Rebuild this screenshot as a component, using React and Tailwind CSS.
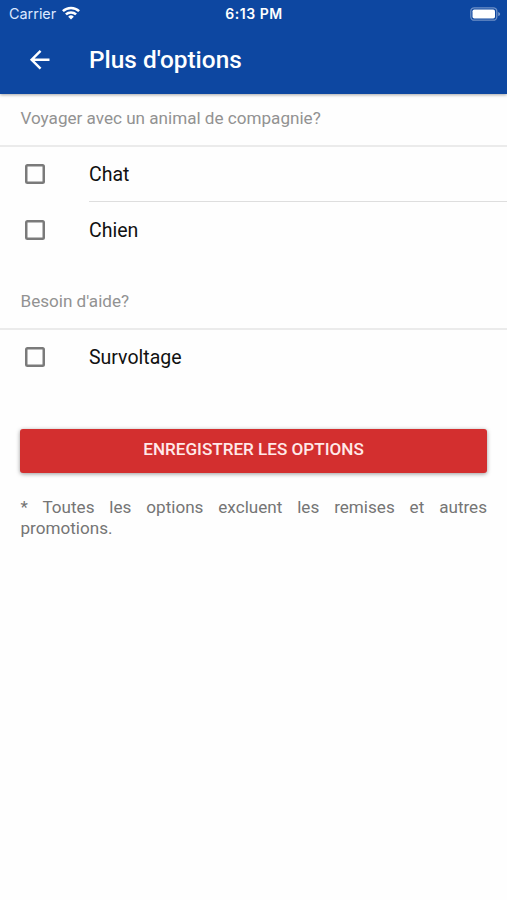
function WifiIcon() {
  return (
    <svg className="ml-[5.5px] h-[14px] w-[18px]" viewBox="0 0 18 14" fill="none" stroke="#fff" strokeWidth="2.5">
      <path d="M.9 5.2C5.3.9 12.7.9 17.1 5.2" />
      <path d="M3.9 8.4c2.8-2.7 7.4-2.7 10.2 0" />
      <path d="M9 13.4 6.2 10.7a4 4 0 0 1 5.6 0Z" fill="#fff" stroke="none" />
    </svg>
  );
}

function BatteryIcon() {
  return (
    <svg className="h-[14px] w-[31px]" viewBox="0 0 31 14">
      <rect x=".8" y=".8" width="26" height="12.4" rx="3.5" fill="none" stroke="#fff" strokeOpacity=".4" strokeWidth="1.3" />
      <rect x="2.5" y="2.5" width="22.5" height="9" rx="1.8" fill="#fff" />
      <path d="M28.2 4.9c2.6.8 2.6 3.4 0 4.2Z" fill="#fff" fillOpacity=".45" />
    </svg>
  );
}

function BackIcon() {
  return (
    <svg className="h-[29.4px] w-[29.4px]" viewBox="0 0 24 24" fill="#fff">
      <path d="M20 11H7.83l5.59-5.59L12 4l-8 8 8 8 1.41-1.41L7.83 13H20v-2z" />
    </svg>
  );
}

function Option({ label, divided }) {
  return (
    <label className="flex h-[55px] items-stretch">
      <span className="flex w-[89px] shrink-0 items-center pb-px pl-[25px]">
        <span className="h-[20px] w-[20px] rounded-[2.5px] shadow-[inset_0_0_0_2.5px_#7a7a7a]" />
      </span>
      <span className={`flex flex-1 items-center text-[19.5px] text-[#111] ${divided ? "shadow-[inset_0_-1px_#dedede]" : ""}`}>
        {label}
      </span>
    </label>
  );
}

function SectionTitle({ children }) {
  return (
    <h2 className="flex h-[53px] items-center border-b-2 border-[#ebebeb] pb-[2px] pl-[20.5px] text-[17.1px] text-[#929292]">
      {children}
    </h2>
  );
}

export default function App() {
  return (
    <div className="h-[900px] w-[507px] overflow-hidden bg-[#fefefe] font-['Roboto',sans-serif]">
      <header className="relative h-[94px] bg-[#0d47a1] text-white shadow-[0_1px_3px_rgba(0,0,0,0.35)]">
        <div className="grid h-[27px] grid-cols-3 items-center pl-[9px] pr-[6px] font-['Inter',sans-serif]">
          <div className="flex items-center text-[14.4px] text-[#dce8ff]">
            Carrier
            <WifiIcon />
          </div>
          <div className="-ml-[2px] text-center text-[14px] font-semibold tracking-[0.55px]">6:13 PM</div>
          <div className="flex justify-end">
            <BatteryIcon />
          </div>
        </div>
        <div className="flex h-[66px] items-center">
          <button className="w-[89px] shrink-0 pl-[25px]" aria-label="Retour">
            <BackIcon />
          </button>
          <h1 className="text-[24.4px] font-medium">Plus d'options</h1>
        </div>
      </header>
      <main>
        <section>
          <SectionTitle>Voyager avec un animal de compagnie?</SectionTitle>
          <Option label="Chat" divided />
          <div className="pt-px">
            <Option label="Chien" />
          </div>
        </section>
        <section className="mt-[19px]">
          <SectionTitle>Besoin d'aide?</SectionTitle>
          <Option label="Survoltage" />
        </section>
        <div className="px-[20px] pt-[44px]">
          <button className="flex h-[43.5px] w-full items-center justify-center rounded-[3px] bg-[#d32f2f] pb-[2px] text-[17.1px] font-medium text-[#ffe9e9] shadow-[0_1px_4px_rgba(0,0,0,0.4)]">
            ENREGISTRER LES OPTIONS
          </button>
          <p className="mt-[24.5px] pl-[0.5px] text-justify text-[17.1px] leading-[21px] text-[#757575]">
            * Toutes les options excluent les remises et autres promotions.
          </p>
        </div>
      </main>
    </div>
  );
}
